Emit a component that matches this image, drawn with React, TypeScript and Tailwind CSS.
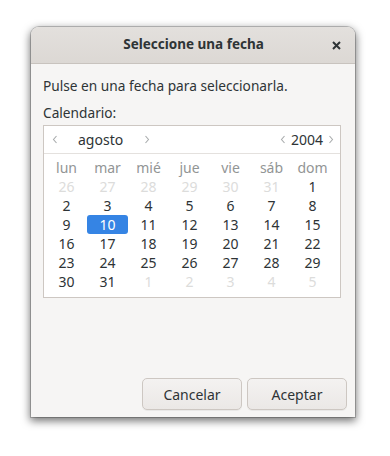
const font = { fontFamily: '"Noto Sans", "Open Sans", sans-serif' };

const dayNames = ["lun", "mar", "mié", "jue", "vie", "sáb", "dom"];

// each cell: [label, inMonth]
const cells: [number, boolean][] = [
  ...[26, 27, 28, 29, 30, 31].map((d) => [d, false] as [number, boolean]),
  ...Array.from({ length: 31 }, (_, i) => [i + 1, true] as [number, boolean]),
  ...[1, 2, 3, 4, 5].map((d) => [d, false] as [number, boolean]),
];

function Chevron({ dir }: { dir: "left" | "right" }) {
  return (
    <svg width="6" height="9" viewBox="0 0 6 9" className="text-[#a9acad]">
      <path
        d={dir === "left" ? "M4.5 1 L1.5 4.5 L4.5 8" : "M1.5 1 L4.5 4.5 L1.5 8"}
        fill="none"
        stroke="currentColor"
        strokeWidth="1.1"
      />
    </svg>
  );
}

export default function App() {
  return (
    <div className="w-[390px] h-[456px] bg-white pt-[27px] pl-[31px] text-[#2e3436]" style={font}>
      <div className="w-[324px] h-[390px] flex flex-col bg-[#f6f5f4] rounded-t-[8px] shadow-[0_3px_9px_1px_rgba(0,0,0,0.55),0_0_0_1px_rgba(0,0,0,0.2)]">
        <div className="h-[37px] flex items-center relative rounded-t-[8px] bg-gradient-to-b from-[#e3e0dd] to-[#dcd8d4] border-b border-[#c8c3be]">
          <div className="flex-1 text-center text-[13.5px] font-bold leading-none pl-[1px]">Seleccione una fecha</div>
          <svg width="9" height="9" viewBox="0 0 9 9" className="absolute right-[14px] top-[14px]">
            <path d="M1 1 L8 8 M8 1 L1 8" stroke="#2e3436" strokeWidth="2" />
          </svg>
        </div>

        <div className="flex-1 flex flex-col px-[12px] pt-[12px]">
          <div className="text-[13.7px] leading-[20px]">Pulse en una fecha para seleccionarla.</div>
          <div className="text-[13.7px] leading-[20px] mt-[7px]">Calendario:</div>

          <div className="mt-[2px] mr-[1px] w-[298px] bg-white border border-[#cdc7c2]">
            <div className="h-[28px] flex items-center border-b border-[#e4e1de] text-[14px]">
              <div className="ml-[4px] w-[14px] flex justify-center"><Chevron dir="left" /></div>
              <div className="ml-[16px] w-[50px]">agosto</div>
              <div className="ml-[12px] w-[14px] flex justify-center"><Chevron dir="right" /></div>
              <div className="flex-1" />
              <div className="w-[12px] flex justify-center"><Chevron dir="left" /></div>
              <div className="ml-[2px]">2004</div>
              <div className="ml-[2px] mr-[3px] w-[12px] flex justify-center"><Chevron dir="right" /></div>
            </div>

            <div className="grid grid-cols-[repeat(7,41px)] pl-[2px] pt-[4px] pb-[6px] text-[14px] leading-[19px] text-center">
              {dayNames.map((n) => (
                <div key={n} className="text-[#929595]">{n}</div>
              ))}
              {cells.map(([d, inMonth], i) => (
                <div
                  key={i}
                  className={
                    inMonth && d === 10
                      ? "bg-[#3584e4] text-white rounded-[3px]"
                      : inMonth
                        ? "text-[#2e3436]"
                        : "text-[#dcdcdb]"
                  }
                >
                  {d}
                </div>
              ))}
            </div>
          </div>

          <div className="flex-1" />
          <div className="flex justify-end gap-[5px] mr-[-4px] mb-[7px]">
            <button className="w-[100px] h-[32px] rounded-[5px] border border-[#cdc7c2] bg-gradient-to-b from-[#f4f2f1] to-[#ebe8e6] text-[14px] shadow-[0_1px_0_rgba(0,0,0,0.05)]">
              Cancelar
            </button>
            <button className="w-[100px] h-[32px] rounded-[5px] border border-[#cdc7c2] bg-gradient-to-b from-[#f4f2f1] to-[#ebe8e6] text-[14px] shadow-[0_1px_0_rgba(0,0,0,0.05)]">
              Aceptar
            </button>
          </div>
        </div>
      </div>
    </div>
  );
}
